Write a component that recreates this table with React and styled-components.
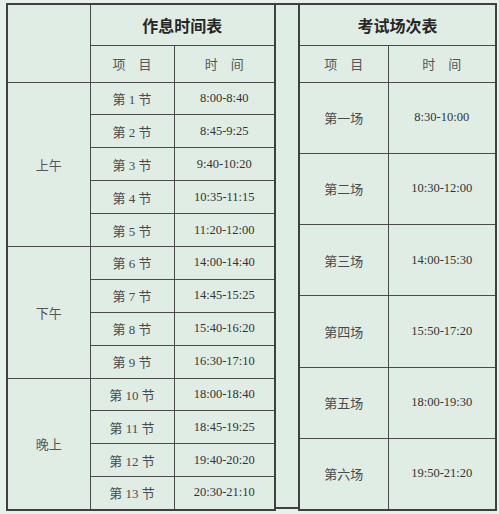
import React from 'react';
import styled, { createGlobalStyle } from 'styled-components';

const GlobalStyle = createGlobalStyle`
  html, body {
    margin: 0;
    padding: 0;
    background: #e7f1eb;
  }
`;

const lessons = [
  ['第 1 节', '8:00-8:40'],
  ['第 2 节', '8:45-9:25'],
  ['第 3 节', '9:40-10:20'],
  ['第 4 节', '10:35-11:15'],
  ['第 5 节', '11:20-12:00'],
  ['第 6 节', '14:00-14:40'],
  ['第 7 节', '14:45-15:25'],
  ['第 8 节', '15:40-16:20'],
  ['第 9 节', '16:30-17:10'],
  ['第 10 节', '18:00-18:40'],
  ['第 11 节', '18:45-19:25'],
  ['第 12 节', '19:40-20:20'],
  ['第 13 节', '20:30-21:10'],
];

const periods = { 0: ['上午', 5], 5: ['下午', 4], 9: ['晚上', 4] };

const exams = [
  ['第一场', '8:30-10:00'],
  ['第二场', '10:30-12:00'],
  ['第三场', '14:00-15:30'],
  ['第四场', '15:50-17:20'],
  ['第五场', '18:00-19:30'],
  ['第六场', '19:50-21:20'],
];

const App = () => (
  <>
    <GlobalStyle />
    <Page>
      <Table $width={268}>
        <colgroup>
          <col style={{ width: 83 }} />
          <col style={{ width: 84 }} />
          <col style={{ width: 101 }} />
        </colgroup>
        <tbody>
          <TitleRow>
            <Cell rowSpan={2} />
            <Title colSpan={2}>作息时间表</Title>
          </TitleRow>
          <HeadRow>
            <Head>项　目</Head>
            <Head>时　间</Head>
          </HeadRow>
          {lessons.map(([name, time], i) => (
            <LessonRow key={name}>
              {periods[i] && (
                <Period rowSpan={periods[i][1]}>{periods[i][0]}</Period>
              )}
              <Cell>{name}</Cell>
              <Time>{time}</Time>
            </LessonRow>
          ))}
        </tbody>
      </Table>
      <Spacer />
      <Table $width={197}>
        <colgroup>
          <col style={{ width: 89 }} />
          <col style={{ width: 108 }} />
        </colgroup>
        <tbody>
          <TitleRow>
            <Title colSpan={2}>考试场次表</Title>
          </TitleRow>
          <HeadRow>
            <Head>项　目</Head>
            <Head>时　间</Head>
          </HeadRow>
          {exams.map(([name, time]) => (
            <ExamRow key={name}>
              <Cell>{name}</Cell>
              <Time>{time}</Time>
            </ExamRow>
          ))}
        </tbody>
      </Table>
    </Page>
  </>
);

export default App;

const Page = styled.div`
  display: flex;
  align-items: stretch;
  padding: 3px 0 0 6px;
`;

const Table = styled.table`
  width: ${(p) => p.$width}px;
  table-layout: fixed;
  border-collapse: collapse;
  border: 2px solid #3f3f3f;
  background: #e0ede5;
`;

const Spacer = styled.div`
  width: 22px;
  height: 506px;
  box-sizing: border-box;
  border-top: 2px solid #3f3f3f;
  border-bottom: 2px solid #3f3f3f;
  background: #e0ede5;
`;

const TitleRow = styled.tr`
  height: 41px;
`;

const HeadRow = styled.tr`
  height: 37px;
`;

const LessonRow = styled.tr`
  height: 32.9px;
`;

const ExamRow = styled.tr`
  height: 71.3px;
`;

const Cell = styled.td`
  padding: 0;
  border: 1.5px solid #4a4a4a;
  text-align: center;
  vertical-align: middle;
  font-family: "Liberation Serif", "Noto Sans CJK SC", serif;
  font-size: 13px;
  color: #4a4a4a;
`;

const Title = styled(Cell)`
  font-family: "Noto Sans CJK SC", sans-serif;
  font-size: 16px;
  font-weight: 700;
  color: #262626;
`;

const Head = styled(Cell)`
  font-size: 13px;
  color: #555;
`;

const Period = styled(Cell)`
  font-size: 13px;
  color: #555;
`;

const Time = styled(Cell)`
  font-size: 12.5px;
  color: #333;
`;
